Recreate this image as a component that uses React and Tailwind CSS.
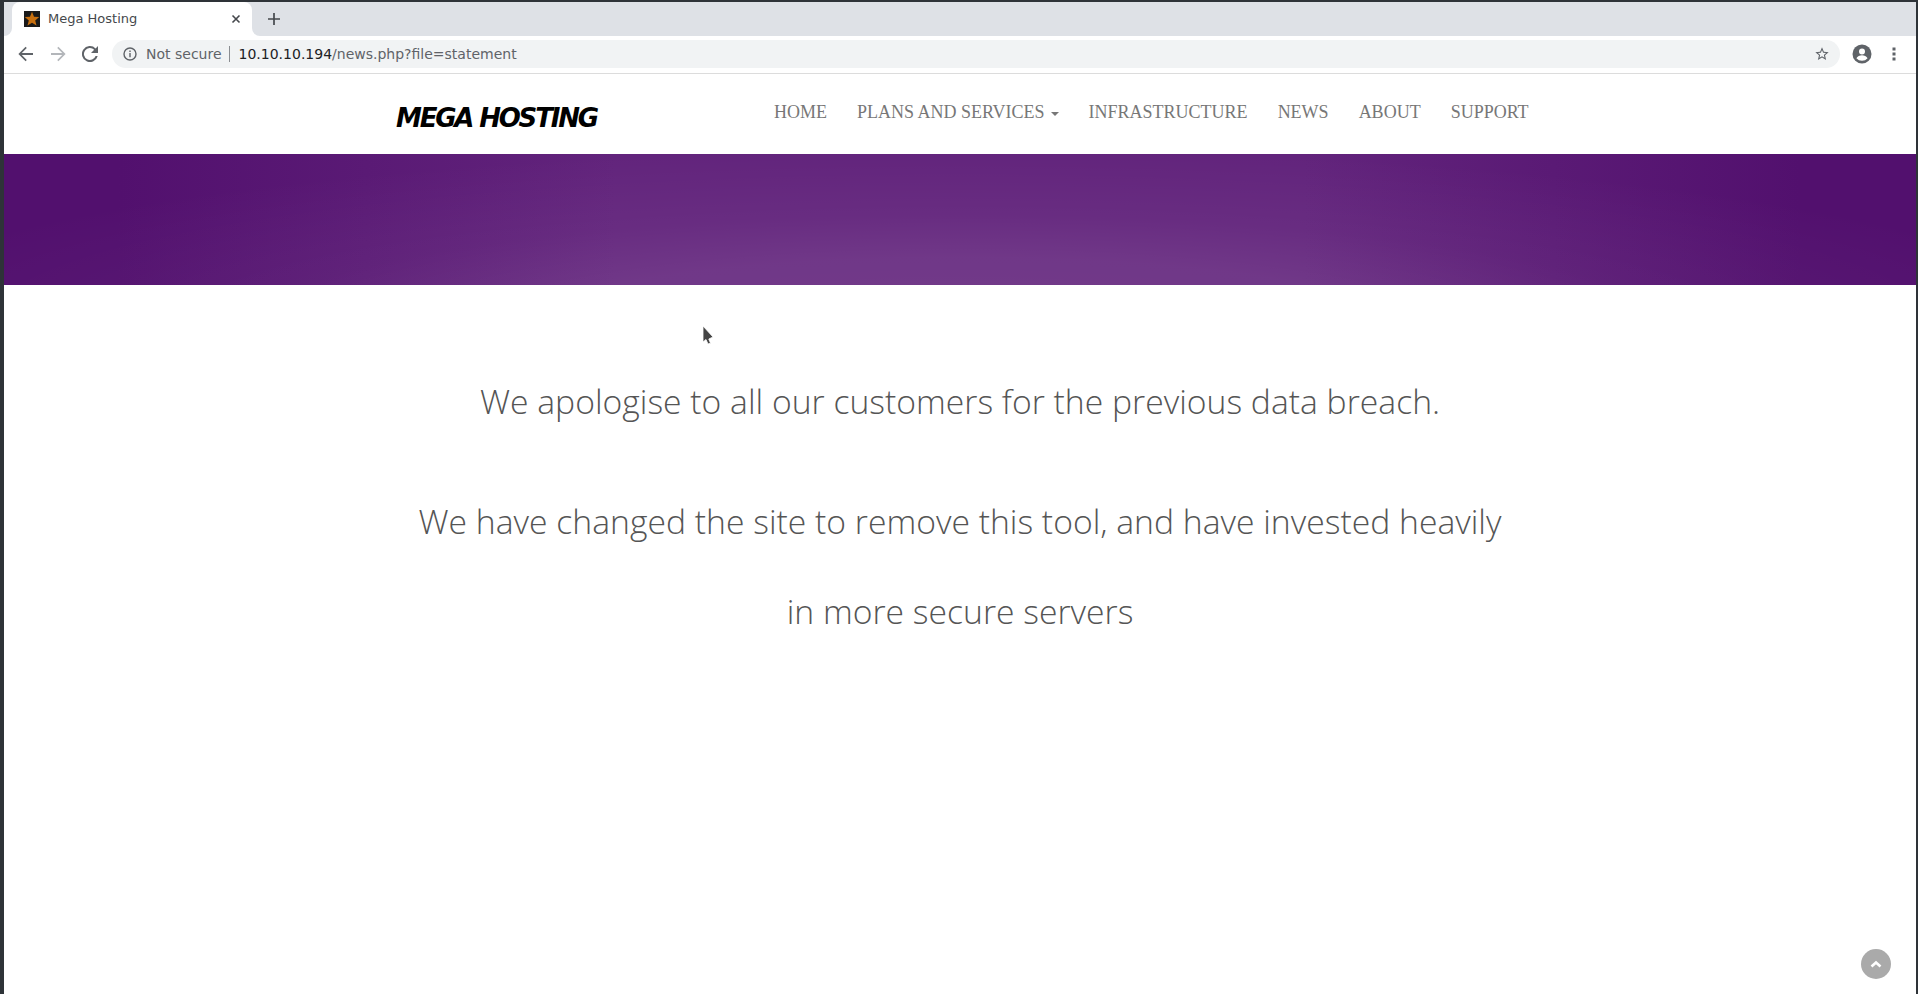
import React from "react";

const navItems = ["Home", "Plans and Services", "Infrastructure", "News", "About", "Support"];

function TabBar() {
  return (
    <div className="flex h-[34px] bg-white shrink-0">
      <div className="w-[8px] bg-[#dee1e6] rounded-br-lg" />
      <div className="bg-[#dee1e6]">
        <div className="flex items-center w-[240px] h-[34px] bg-white rounded-t-lg pl-[12px] pr-[10px]">
          {/* favicon */}
          <svg width="16" height="16" viewBox="0 0 16 16" className="shrink-0">
            <rect width="16" height="16" fill="#1a1a1a" />
            <path d="M8 .8l2 5 5.200.3-4 3.300 1.300 5.100L8 11.700l-4.500 2.800 1.300-5.100-4-3.300L6 5.800z" fill="#c8700f" />
          </svg>
          <span className="ml-[8px] text-[13px] text-[#45484c] font-['DejaVu_Sans',sans-serif] flex-1">Mega Hosting</span>
          <svg width="10" height="10" viewBox="0 0 10 10" className="mr-[1px]">
            <path d="M1.500 1.500l7 7M8.500 1.500l-7 7" stroke="#45484c" strokeWidth="1.600" />
          </svg>
        </div>
      </div>
      <div className="flex-1 flex items-center bg-[#dee1e6] rounded-bl-lg pl-[16px]">
        <svg width="12" height="12" viewBox="0 0 12 12">
          <path d="M6 0v12M0 6h12" stroke="#45484c" strokeWidth="1.700" />
        </svg>
      </div>
    </div>
  );
}

function Toolbar() {
  return (
    <div className="flex items-center h-[38px] bg-white border-b border-[#dcdcdc] shrink-0 pb-[1px]">
      <svg width="16" height="16" viewBox="0 0 16 16" className="ml-[14px]">
        <path d="M15 7H3.800l5-5L7.600.8.400 8l7.200 7.200 1.200-1.200-5-5H15z" fill="#5f6368" />
      </svg>
      <svg width="16" height="16" viewBox="0 0 16 16" className="ml-[16px]">
        <path d="M1 7h11.200l-5-5L8.400.8 15.600 8l-7.200 7.200-1.200-1.200 5-5H1z" fill="#b3b6ba" />
      </svg>
      <svg width="16" height="16" viewBox="0 0 16 16" className="ml-[16px]">
        <path d="M13.600 2.400A8 8 0 1 0 15.700 10h-2.100a6 6 0 1 1-1.400-6.200L9 7h7V0z" fill="#5f6368" />
      </svg>
      <div className="flex items-center ml-[14px] flex-1 h-[28px] rounded-full bg-[#f1f3f4] pl-[11px] font-['DejaVu_Sans',sans-serif] text-[14px]">
        <svg width="14" height="14" viewBox="0 0 14 14">
          <circle cx="7" cy="7" r="6" fill="none" stroke="#5f6368" strokeWidth="1.400" />
          <path d="M6.300 6h1.400v4.200H6.300zM6.300 3.600h1.400V5H6.300z" fill="#5f6368" />
        </svg>
        <span className="ml-[9px] text-[#5f6368]">Not secure</span>
        <span className="ml-[7px] w-px h-[16px] bg-[#8a8d91]" />
        <span className="ml-[9px] text-[#202124]">
          10.10.10.194<span className="text-[#5f6368]">/news.php?file=statement</span>
        </span>
        <svg width="16" height="16" viewBox="0 0 24 24" className="ml-auto mr-[10px]">
          <path
            d="M22 9.240l-7.190-.62L12 2 9.190 8.630 2 9.240l5.460 4.730L5.820 21 12 17.270 18.180 21l-1.630-7.030L22 9.240zM12 15.400l-3.760 2.270 1-4.280-3.320-2.880 4.380-.38L12 6.100l1.710 4.040 4.380.38-3.320 2.880 1 4.280L12 15.400z"
            fill="#5f6368"
          />
        </svg>
      </div>
      <svg width="20" height="20" viewBox="0 0 20 20" className="ml-[12px]">
        <circle cx="10" cy="10" r="9.500" fill="#5f6368" />
        <circle cx="10" cy="7.400" r="3" fill="#fff" />
        <path d="M4.400 14.200c1-2 3.400-3 5.600-3s4.600 1 5.600 3A7.300 7.300 0 0 1 10 16.800a7.300 7.300 0 0 1-5.600-2.600z" fill="#fff" />
      </svg>
      <svg width="4" height="14" viewBox="0 0 4 14" className="ml-[20px]">
        <rect x="0.500" y="0.500" width="3" height="3" fill="#5f6368" />
        <rect x="0.500" y="5.500" width="3" height="3" fill="#5f6368" />
        <rect x="0.500" y="10.500" width="3" height="3" fill="#5f6368" />
      </svg>
      <div className="w-[20px]" />
    </div>
  );
}

function SiteHeader() {
  return (
    <div className="flex items-start h-[80px] bg-white shrink-0 pl-[392px]">
      <div className="w-[378px] pt-[29px] text-[26px] leading-[30px] font-bold italic text-black tracking-[-2.200px] whitespace-nowrap font-['DejaVu_Sans',sans-serif]">
        MEGA HOSTING
      </div>
      <ul className="flex gap-[30px] pt-[26px] uppercase text-[18px] leading-[24px] text-[#777] font-['Liberation_Serif',serif]">
        {navItems.map((item) => (
          <li key={item} className="flex items-center">
            {item}
            {item === "Plans and Services" && (
              <span className="ml-[6px] mt-[3px] border-x-[4px] border-x-transparent border-t-[4px] border-t-[#777]" />
            )}
          </li>
        ))}
      </ul>
    </div>
  );
}

export default function App() {
  return (
    <div className="relative flex flex-col w-[1918px] h-[994px] overflow-hidden bg-white border-t-2 border-l-4 border-r-2 border-[#2e3338]">
      <TabBar />
      <Toolbar />
      <SiteHeader />

      {/* purple banner */}
      <div className="h-[131px] shrink-0 bg-[radial-gradient(ellipse_70%_160%_at_50%_130%,rgba(255,255,255,0.1)_0%,rgba(255,255,255,0.09)_32%,rgba(255,255,255,0.04)_52%,rgba(255,255,255,0)_85%),linear-gradient(90deg,#52106e_6%,#62247c_32%,#62247c_68%,#52106e_94%)]" />

      <div className="pt-[71px] text-center text-[33.7px] leading-[90px] font-light text-[#555] font-['Open_Sans',sans-serif]">
        <p className="mb-[30px]">We apologise to all our customers for the previous data breach.</p>
        <p className="w-[1110px] mx-auto">We have changed the site to remove this tool, and have invested heavily in more secure servers</p>
      </div>

      {/* mouse pointer */}
      <svg width="14" height="23" viewBox="0 0 14 23" className="absolute left-[697px] top-[322px]">
        <path d="M2 2v16l3-2.500 2 4.500 2.500-.8-1.700-4.200L12 13z" fill="#444" stroke="#fff" strokeWidth="1" strokeOpacity="0.800" />
      </svg>

      {/* back to top */}
      <div className="absolute left-[1857px] top-[947px] flex items-center justify-center w-[30px] h-[30px] rounded-full bg-[#aaa]">
        <svg width="12" height="8" viewBox="0 0 12 8">
          <path d="M1.500 6.500L6 2.500l4.500 4" fill="none" stroke="#fff" strokeWidth="2.600" />
        </svg>
      </div>
    </div>
  );
}
